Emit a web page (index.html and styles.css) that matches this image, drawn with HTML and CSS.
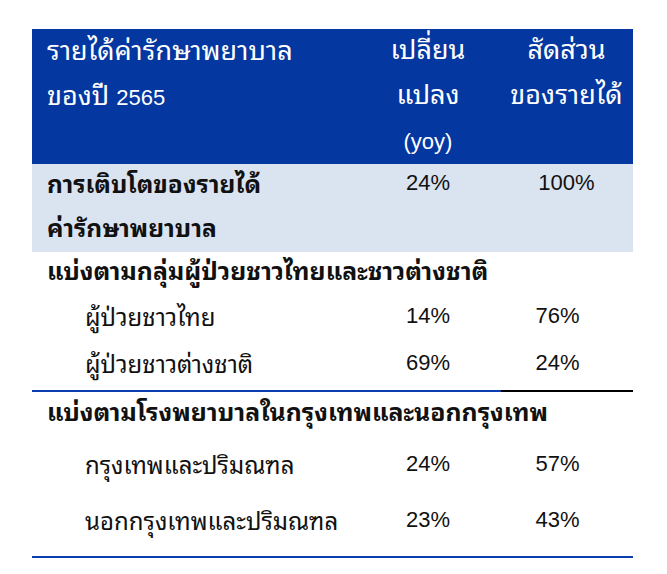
FILE: index.html
```html
<!DOCTYPE html>
<html lang="th">
<head>
<meta charset="utf-8">
<title>รายได้ค่ารักษาพยาบาล</title>
<link rel="stylesheet" href="styles.css">
</head>
<body>
<div class="tbl">
  <div class="row head">
    <div class="c1">รายได้ค่ารักษาพยาบาล<br>ของปี <span class="num">2565</span></div>
    <div class="c2">เปลี่ยน<br>แปลง<br><span class="num">(yoy)</span></div>
    <div class="c3">สัดส่วน<br>ของรายได้</div>
  </div>
  <div class="row total">
    <div class="c1">การเติบโตของรายได้<br>ค่ารักษาพยาบาล</div>
    <div class="c2 num">24%</div>
    <div class="c3 num">100%</div>
  </div>
  <div class="row section sec1">
    <div class="c1 wide">แบ่งตามกลุ่มผู้ป่วยชาวไทยและชาวต่างชาติ</div>
  </div>
  <div class="row sub r1">
    <div class="c1">ผู้ป่วยชาวไทย</div>
    <div class="c2 num">14%</div>
    <div class="c3 num">76%</div>
  </div>
  <div class="row sub r2">
    <div class="c1">ผู้ป่วยชาวต่างชาติ</div>
    <div class="c2 num">69%</div>
    <div class="c3 num">24%</div>
  </div>
  <div class="row section sec2">
    <div class="c1 wide">แบ่งตามโรงพยาบาลในกรุงเทพและนอกกรุงเทพ</div>
  </div>
  <div class="row sub r3">
    <div class="c1">กรุงเทพและปริมณฑล</div>
    <div class="c2 num">24%</div>
    <div class="c3 num">57%</div>
  </div>
  <div class="row sub r4">
    <div class="c1">นอกกรุงเทพและปริมณฑล</div>
    <div class="c2 num">23%</div>
    <div class="c3 num">43%</div>
  </div>
</div>
</body>
</html>
```
FILE: styles.css
```css
html, body {
  margin: 0;
  padding: 0;
  background: #ffffff;
}
body {
  font-family: "Noto Sans Thai Looped", "Loma", "Liberation Sans", sans-serif;
  font-size: 24px;
  color: #111111;
}
.num {
  font-family: "Liberation Sans", "Arial", sans-serif;
  font-size: 22px;
  font-weight: normal;
}
.head .num { line-height: 1; }
.tbl {
  margin: 29px 0 0 32px;
  width: 601px;
}
.row {
  display: grid;
  grid-template-columns: 324px 144px 133px;
  line-height: 44px;
}
.row > .c1 {
  margin-top: -4px;
  padding-bottom: 4px;
}
.row > .num {
  margin-top: -3px;
  padding-bottom: 3px;
}
.head > div {
  margin-top: -5px;
  padding-bottom: 5px;
}
.c1 { padding-left: 15px; white-space: nowrap; }
.c2, .c3 { text-align: center; white-space: nowrap; }
.wide { grid-column: 1 / 4; }
.head {
  background: #0437a0;
  color: #ffffff;
  font-size: 27px;
  line-height: 45px;
}
.total {
  background: #dae3f0;
  font-weight: bold;
  font-size: 24.5px;
}
.section {
  font-weight: bold;
  font-size: 24.8px;
}
.sub .c1 { padding-left: 53px; }
.sub .c3 { padding-right: 18px; }
.sec1 { line-height: 42px; }
.r1 { line-height: 50px; }
.r2 {
  line-height: 44px;
  padding-bottom: 2px;
  border-bottom: 2px solid;
  border-image: linear-gradient(to right, #0b3db0 0 468px, #000000 468px 100%) 1;
}
.sec2 { line-height: 44px; }
.r3 { line-height: 46px; padding-top: 8px; }
.r4 {
  line-height: 46px;
  padding-top: 10px;
  padding-bottom: 10px;
  border-bottom: 2px solid #0b3db0;
}
```
